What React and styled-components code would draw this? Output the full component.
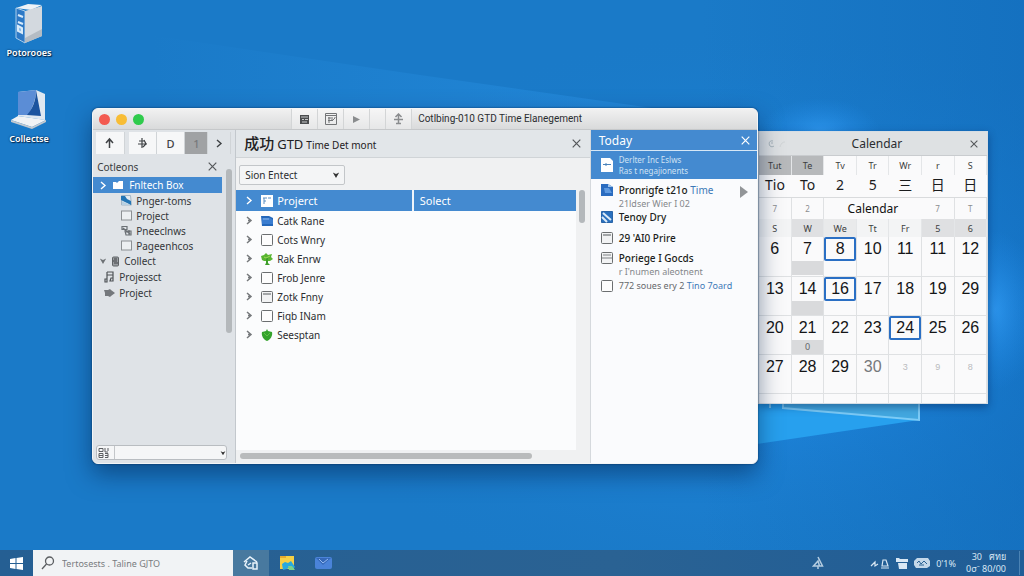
import React from "react";
import styled, { createGlobalStyle } from "styled-components";

const GlobalStyle = createGlobalStyle`
  * {
    box-sizing: border-box;
  }
  body {
    margin: 0;
    font-family: "Noto Sans", "Noto Sans CJK SC", sans-serif;
    font-size: 11px;
    color: #2b2d30;
  }
  button, select, input {
    font: inherit;
    color: inherit;
    margin: 0;
    padding: 0;
    border: none;
    background: none;
    border-radius: 0;
  }
  svg {
    display: block;
    flex: none;
  }
`

const Desktop = styled.div`
  position: relative;
  display: flex;
  flex-direction: column;
  min-height: 100vh;
  overflow: hidden;
  background-color: #1678c8;
`

const WallpaperSvg = styled.svg`
  position: absolute;
  top: 0;
  left: 0;
  width: 100%;
  height: 100%;
`

const Workspace = styled.main`
  position: relative;
  flex: 1;
  min-height: 480px;
`

const Shortcuts = styled.nav`
  position: relative;
  display: flex;
  flex-direction: column;
  align-items: center;
  gap: 28px;
  width: 58px;
  padding-top: 2px;
`

const Shortcut = styled.a`
  display: flex;
  flex-direction: column;
  align-items: center;
  gap: 2px;
  color: white;
  font-size: 9px;
  font-weight: 600;
  line-height: 14px;
  text-decoration: none;
  text-shadow: 1px 1px 1px #06284c, 0 0 2px #06284c;
`

const AppWindow = styled.section`
  position: absolute;
  z-index: 2;
  top: 108px;
  left: 9%;
  width: 65%;
  min-height: 356px;
  display: flex;
  flex-direction: column;
  border: 1px solid #f3f5f6;
  border-radius: 6px;
  background-color: #f0f1f2;
  box-shadow: 0 10px 24px rgba(0, 30, 70, 0.5), 0 0 2px rgba(0, 30, 70, 0.8);
  overflow: hidden;
`

const TitleBar = styled.header`
  display: flex;
  height: 21px;
  padding-left: 6px;
  background: linear-gradient(#f1f1f1, #d9dadb);
  border-bottom: 1px solid #c6c8ca;
`

const TrafficLights = styled.div`
  display: flex;
  align-items: center;
  gap: 6px;
  width: 192px;
`

const Light = styled.button`
  width: 11px;
  height: 11px;
  border-radius: 50%;
  background-color: ${props => props.$color};
`

const TitleTool = styled.button`
  display: flex;
  align-items: center;
  justify-content: center;
  width: ${props => props.$narrow ? 16 : 26}px;
  color: ${props => props.$dim ? "#8a8c8e" : "#3c3e40"};
  background-color: rgba(255, 255, 255, 0.35);
  border-left: 1px solid #d3d5d6;
`

const WindowTitle = styled.h1`
  flex: 1;
  margin: 0;
  padding-left: 6px;
  border-left: 1px solid #d3d5d6;
  font-family: Roboto, "Liberation Sans", sans-serif;
  font-size: 10px;
  font-weight: 400;
  line-height: 20px;
  white-space: nowrap;
`

const WindowBody = styled.div`
  flex: 1;
  display: grid;
  grid-template-columns: 143px minmax(0, 1fr) 167px;
`

const Sidebar = styled.aside`
  display: flex;
  flex-direction: column;
  background-color: #dfe3e7;
  border-right: 1px solid #c3c8cd;
`

const SidebarTools = styled.div`
  display: flex;
  height: 26px;
  padding: 2px 4px 2px 3px;
`

const SidebarTool = styled.button`
  flex: ${props => props.$plain || props.$active ? 4 : 5};
  display: flex;
  align-items: center;
  justify-content: center;
  color: ${props => props.$active ? "#77797b" : "#3f4245"};
  background-color: ${props => props.$active ? "#a0a2a4" : props.$plain ? "transparent" : "#f6f7f8"};
  border-right: 1px solid #d0d4d7;
  font-size: 11px;
  font-weight: 500;

  &:first-child {
    margin-right: 4px;
  }
`

const SidebarHeader = styled.div`
  display: flex;
  align-items: center;
  justify-content: space-between;
  height: 21px;
  padding: 0 18px 0 4px;
  font-size: 10px;
  color: #3a3d40;
`

const CloseButton = styled.button`
  display: flex;
  align-items: center;
  color: ${props => props.$light ? "white" : "#55585b"};
`

const TreeArea = styled.div`
  flex: 1;
  display: flex;
  justify-content: space-between;
  align-items: flex-start;
`

const Tree = styled.ul`
  width: 129px;
  margin: 0;
  padding: 0;
  list-style: none;
`

const TreeRow = styled.li`
  display: flex;
  align-items: center;
  gap: 4px;
  height: ${props => props.$deep ? 15 : 16}px;
  padding-left: ${props => props.$deep ? 28 : props.$flat ? 11 : 6}px;
  font-size: 10px;
  color: ${props => props.$active ? "white" : "#34373a"};
  background-color: ${props => props.$active ? "#448ad0" : "transparent"};
  white-space: nowrap;
`

const VerticalThumb = styled.div`
  width: 6px;
  height: ${props => props.$length}px;
  border-radius: 3px;
  background-color: #b4b8bb;
`

const SidebarThumb = styled(VerticalThumb)`
  margin: -8px 3px 0 0;
`

const Combo = styled.div`
  display: flex;
  align-items: center;
  height: 15px;
  margin: 0 8px 3px 3px;
  background-color: #f5f6f7;
  border: 1px solid #b9bdc1;
  border-radius: 3px;
`

const SelectBox = styled.span`
  position: relative;
  display: flex;
  align-items: center;
  flex: ${props => props.$fill ? 1 : "none"};

  svg {
    position: absolute;
    right: ${props => props.$fill ? 0 : 5}px;
    pointer-events: none;
  }
`

const ComboSelect = styled.select`
  appearance: none;
  width: 100%;
  height: 13px;
  margin-left: 3px;
  border-left: 1px solid #c3c6c9;
`

const Content = styled.section`
  display: flex;
  flex-direction: column;
  min-width: 0;
`

const ContentHeader = styled.div`
  display: flex;
  align-items: center;
  height: 28px;
  padding: 0 9px 0 8px;
  background-color: #e2e6e9;
  border-bottom: 1px solid #d0d4d7;
`

const ContentTitle = styled.h2`
  flex: 1;
  display: flex;
  align-items: baseline;
  gap: 3px;
  margin: 0;
  font-size: 13px;
  font-weight: 400;
  line-height: 24px;
  color: #1f2123;

  span {
    font-size: 15px;
    font-weight: 500;
  }
  small {
    font-size: 10px;
  }
`

const Filter = styled.div`
  display: flex;
  padding: 7px 3px 5px;
`

const FilterSelect = styled.select`
  appearance: none;
  width: 106px;
  height: 20px;
  padding-left: 5px;
  font-size: 10px;
  background-color: #f4f5f6;
  border: 1px solid #c3c6c9;
  border-radius: 2px;
`

const ListArea = styled.div`
  flex: 1;
  display: flex;
  gap: 3px;
  padding-right: 5px;
`

const ListPane = styled.div`
  flex: 1;
  background-color: #fbfcfd;
`

const ProjectTable = styled.table`
  width: 100%;
  border-collapse: collapse;
  table-layout: fixed;

  th, td {
    padding: 0 0 0 9px;
    text-align: left;
    font-weight: 400;
    white-space: nowrap;
  }
  th {
    height: 21px;
    color: white;
    background-color: #448ad0;
    font-size: 11px;
  }
  th:first-child {
    width: 52%;
  }
  th + th {
    padding-left: 6px;
    border-left: 2px solid #eef4fa;
  }
  td {
    height: 19px;
    font-size: 10px;
  }
`

const Cell = styled.div`
  display: flex;
  align-items: center;
  gap: 4px;

  svg:first-child {
    margin-right: 4px;
  }
`

const BottomScroll = styled.div`
  height: 13px;
  padding: 3px 58px 4px 4px;

  div {
    height: 6px;
    border-radius: 3px;
    background-color: #b9bbbc;
  }
`

const Today = styled.aside`
  background-color: #fafbfd;
  border-left: 1px solid #d5d9dd;
`

const TodayHeader = styled.div`
  display: flex;
  align-items: center;
  justify-content: space-between;
  height: 21px;
  padding: 0 7px 0 8px;
  color: white;
  background-color: #448ad0;
  font-size: 12px;
  border-bottom: 1px solid #d6e7f6;
`

const TodayFeature = styled.div`
  display: flex;
  align-items: center;
  gap: 6px;
  height: 28px;
  padding-left: 10px;
  color: #cfe2f4;
  background-color: #448ad0;
  font-size: 8px;
  line-height: 11px;
`

const TodayList = styled.ul`
  margin: 0;
  padding: 4px 0 0 10px;
  list-style: none;
`

const TodayItem = styled.li`
  display: flex;
  align-items: flex-start;
  gap: 6px;
  padding-bottom: ${props => props.$space}px;
  font-size: 10px;
  line-height: 14px;
  white-space: nowrap;

  > svg {
    margin-top: 1px;
  }
`

const ItemText = styled.div`
  flex: 1;
  color: ${props => props.$quiet ? "#66696c" : "#1c1e20"};
  font-size: ${props => props.$quiet ? 9 : 10}px;
  font-weight: ${props => props.$quiet ? 400 : 500};

  em {
    color: #3c79b8;
    font-style: normal;
    font-weight: 400;
  }
  small {
    display: block;
    color: #85888b;
    font-size: 9px;
    font-weight: 400;
    line-height: 13px;
  }
`

const NextButton = styled.button`
  padding: 3px 9px 0 0;
  color: #929598;
`

const CalendarWindow = styled.section`
  position: absolute;
  z-index: 1;
  top: 131px;
  left: 74%;
  width: 22.5%;
  border: 1px solid #d5dde4;
  background-color: #fafafb;
  box-shadow: 0 3px 8px rgba(0, 30, 80, 0.45);
`

const CalendarHeader = styled.header`
  display: grid;
  grid-template-columns: 1fr auto 1fr;
  align-items: center;
  height: 24px;
  padding: 0 9px;
  background-color: #dee1e3;
  border-bottom: 1px solid #c9cccf;

  h2 {
    margin: 0;
    padding-left: 8px;
    font-size: 12px;
    font-weight: 400;
  }
  button {
    justify-self: end;
  }
`

const CalendarTable = styled.table`
  width: 100%;
  border-collapse: collapse;
  table-layout: fixed;
  text-align: center;

  th, td {
    padding: 0;
    font-weight: 400;
  }
`

const DayName = styled.th`
  height: ${props => props.$short ? 18 : 19}px;
  font-size: 9px;
  color: #3c3e40;
  background-color: ${props => props.$shade};
  border-right: 1px solid #e4e6e8;
`

const Glyph = styled.td`
  height: 22px;
  font-size: 14px;
  color: #1b1c1e;
  vertical-align: top;
  line-height: 20px;
  border-bottom: 1px solid #d9dbdd;
`

const MiniCell = styled.td`
  height: 22px;
  font-size: 8px;
  color: #8a8d90;
  border-right: 1px solid #dfe1e3;
`

const MonthName = styled.th`
  font-size: 12px;
  color: #111;
`

const DateCell = styled.td`
  height: 39px;
  vertical-align: top;
  border-right: 1px solid #dfe1e3;
  border-bottom: 1px solid #dfe1e3;
  background-color: #fafafb;
`

const DateBox = styled.div`
  height: 24px;
  border: 2px solid ${props => props.$marked ? "#2a6fc4" : "transparent"};
  border-radius: 2px;
  font-family: "Liberation Sans", Arial, sans-serif;
  font-size: ${props => props.$faint ? 9 : 16}px;
  line-height: 20px;
  color: ${props => props.$faint ? "#b9bbbe" : props.$grey ? "#76787b" : "#141517"};
`

const DateNote = styled.div`
  height: 14px;
  font-size: 9px;
  line-height: 13px;
  color: #626568;
  background-color: #d9dadc;
`

const FootCell = styled.td`
  height: 10px;
  border-right: 1px solid #dfe1e3;
`

const Taskbar = styled.footer`
  position: relative;
  z-index: 3;
  display: flex;
  height: 26px;
  color: #d8e7f4;
  background: linear-gradient(90deg, #255f93, #2a6293 60%, #1f5d97);
`

const TaskButton = styled.button`
  display: flex;
  align-items: center;
  justify-content: center;
  width: ${props => props.$start ? 33 : 36}px;
  color: #e9f3fb;
  background-color: ${props => props.$active ? "#48799f" : "transparent"};
`

const SearchBox = styled.label`
  display: flex;
  align-items: center;
  gap: 7px;
  width: 200px;
  padding-left: 8px;
  color: #5b5e61;
  background-color: #f1f3f5;

  input {
    width: 150px;
    font-size: 9px;
    outline: none;
  }
  input::placeholder {
    color: #797c7f;
    opacity: 1;
  }
`

const Tray = styled.div`
  display: flex;
  align-items: center;
  gap: 6px;
  margin-left: auto;
  padding-right: 4px;
  font-size: 9px;
`

const TrayUp = styled(TaskButton)`
  margin-right: 28px;
`

const Clock = styled.div`
  width: 58px;
  padding-right: 13px;
  text-align: right;
  line-height: 12px;
  border-right: 1px solid #4b83b4;
  white-space: pre;
`

const Close = ({ size = 9 }) => (
    <svg width={size} height={size} viewBox="0 0 9 9" fill="none" stroke="currentColor" strokeWidth="1.2">
        <path d="M.7.7l7.6 7.6M8.3.7L.7 8.3"/>
    </svg>
)

const Chevron = () => (
    <svg width="8" height="9" viewBox="0 0 8 9" fill="none" stroke="currentColor" strokeWidth="1.4">
        <path d="M2 1l4 3.500L2 8"/>
    </svg>
)

const Caret = ({ size = 8, color = "#333" }) => (
    <svg width={size} height={size} viewBox="0 0 8 8" fill={color}><path d="M.8 1.500L4 3l3.200-1.500L4 7z"/></svg>
)

const Pointer = () => (
    <svg width="8" height="9" viewBox="0 0 8 9" fill="none" stroke="#76797c" strokeWidth="1.500"><path d="M2 1l4 3.500L2 8M3 4.500h3"/></svg>
)

const icons = {
    folder: <svg width="14" height="12" viewBox="0 0 14 12" fill="white"><path d="M2 3h3l1 1 2-2h4v8H2z"/></svg>,
    doc: (
        <svg width="11" height="11" viewBox="0 0 11 11">
            <path d="M.5.5h9l1 9.500H.5z" fill="#e2eaf1" stroke="#a4b6c5"/>
            <path d="M0 1h4l2 3 4 2v4C7 8 3 7 0 5z" fill="#2375b5"/>
            <path d="M1 6c3 2 5 2 8 4H1z" fill="#b7d0e2"/>
        </svg>
    ),
    box: <svg width="11" height="11" viewBox="0 0 11 11"><rect x=".5" y="1" width="10" height="9" fill="#eceff1" stroke="#8c9093"/></svg>,
    scribble: (
        <svg width="11" height="11" viewBox="0 0 11 11" fill="none" stroke="#6b7075">
            <path d="M1 1.500h5v3H1zM4 6h6v4H5zM2 3l7 6M5 7h4M8 5v5" strokeWidth="1.200"/>
        </svg>
    ),
    jar: (
        <svg width="9" height="11" viewBox="0 0 9 11">
            <rect x="1.500" y="1" width="6" height="9" rx="1" fill="#9a9ea2" stroke="#5f6366"/>
            <path d="M3 3h3M2 5h4M3 7h4" stroke="#404346"/>
        </svg>
    ),
    note: (
        <svg width="11" height="12" viewBox="0 0 11 12" fill="none" stroke="#4e5256" strokeWidth="1.200">
            <path d="M3 1h6v9H7M3 1v7M3 4h6M1 8h2v3H1zM7 7h2v3H6z"/>
        </svg>
    ),
    arrow: <svg width="11" height="10" viewBox="0 0 11 10" fill="#74787c"><path d="M0 2l4 0 2-1 1 1 4 3-4 3-1 1-2-1-3 0 0-3z"/></svg>,
    sheet: (
        <svg width="12" height="12" viewBox="0 0 12 12">
            <path d="M0 0h12v12H0z" fill="white"/>
            <path d="M2 3h4M3 3v6M3 6h2M7 3h3" stroke="#5a8fc3"/>
        </svg>
    ),
    blue: (
        <svg width="12" height="12" viewBox="0 0 12 12">
            <path d="M0 1h8l4 2v8H1z" fill="#2367ba"/>
            <path d="M1 3h8l3 2v4H1z" fill="#3a7dd0"/>
            <path d="M2 4h6" stroke="#8ab8ec"/>
        </svg>
    ),
    blueDoc: (
        <svg width="12" height="12" viewBox="0 0 12 12">
            <path d="M0 0h7l5 3v9H0z" fill="#2a6cc0"/>
            <path d="M3 4h5l3 5H4z" fill="#5f9ae0"/>
            <path d="M7 0v3h5z" fill="#a2c6ec"/>
        </svg>
    ),
    blueSlash: (
        <svg width="12" height="12" viewBox="0 0 12 12">
            <path d="M.5.5h11v11H.5z" fill="#2a70be" stroke="#2a65a8"/>
            <path d="M2 2l8 7M1 6l5 5" stroke="#dcebf8" strokeWidth="2"/>
        </svg>
    ),
    check: <svg width="12" height="12" viewBox="0 0 12 12"><rect x=".5" y=".5" width="11" height="11" rx="1" fill="#fdfdfd" stroke="#6b6e70"/></svg>,
    pane: (
        <svg width="12" height="12" viewBox="0 0 12 12">
            <rect x=".5" y=".5" width="11" height="11" rx="1" fill="#f2f3f4" stroke="#6b6e70"/>
            <path d="M2 3h8" stroke="#a3a6a8" strokeWidth="2"/>
        </svg>
    ),
    lines: (
        <svg width="12" height="12" viewBox="0 0 12 12">
            <rect x=".5" y=".5" width="11" height="11" rx="1" fill="#f2f3f4" stroke="#6b6e70"/>
            <path d="M2 3h8M1 6h10" stroke="#7f8285"/>
        </svg>
    ),
    tree: (
        <svg width="12" height="12" viewBox="0 0 12 12">
            <path d="M0 3l3-1 2-2 2 2 4-1-1 3 2 2-3 2H3L1 7z" fill="#58b531"/>
            <path d="M5 5h2v5l2 2H4l1-2z" fill="#3d9e2b"/>
            <path d="M3 4l2 1 4-2" stroke="#a0d858" fill="none"/>
        </svg>
    ),
    leaf: (
        <svg width="12" height="12" viewBox="0 0 12 12">
            <path d="M1 3l4-1 1-2 1 2 4 1c1 4-2 8-5 9C3 11 0 7 1 3z" fill="#35a32d"/>
            <path d="M3 4l3 3 3-3" stroke="#5fc244" fill="none"/>
        </svg>
    ),
}

const treeRows = [
    { icon: "doc", label: "Pnger-toms", deep: true },
    { icon: "box", label: "Project", deep: true },
    { icon: "scribble", label: "Pneeclnws", deep: true },
    { icon: "box", label: "Pageenhcos", deep: true },
]

const projects = [
    { icon: "blue", label: "Catk Rane" },
    { icon: "check", label: "Cots Wnry" },
    { icon: "tree", label: "Rak Enrw" },
    { icon: "check", label: "Frob Jenre" },
    { icon: "pane", label: "Zotk Fnny" },
    { icon: "check", label: "Fiqb INam" },
    { icon: "leaf", label: "Seesptan" },
]

const weeks = [
    ["6", "7", "8", "10", "11", "11", "12"],
    ["13", "14", "16", "17", "18", "19", "29"],
    ["20", "21", "22", "23", "24", "25", "26"],
    ["27", "28", "29", "30", "3", "9", "8"],
]

const marked = ["0-2", "1-2", "2-4"]

const Wallpaper = () => (
    <WallpaperSvg viewBox="0 0 1024 576" preserveAspectRatio="none" aria-hidden="true">
        <defs>
            <radialGradient id="glow" cx="0.76" cy="0.55" r="0.5">
                <stop offset="0" stopColor="#2598fa"/>
                <stop offset="0.5" stopColor="#1e85dc" stopOpacity="0.6"/>
                <stop offset="1" stopColor="#1a7bca" stopOpacity="0"/>
            </radialGradient>
            <radialGradient id="spot" cx="0.5" cy="0.5" r="0.5">
                <stop offset="0" stopColor="#38a5ff" stopOpacity="0.6"/>
                <stop offset="1" stopColor="#2490f0" stopOpacity="0"/>
            </radialGradient>
            <linearGradient id="edge" x1="0" x2="1" y1="0" y2="0">
                <stop offset="0" stopColor="#0f68b8" stopOpacity="0"/>
                <stop offset="1" stopColor="#0f68b8" stopOpacity="0.5"/>
            </linearGradient>
            <linearGradient id="beam" x1="0" x2="1" y1="0" y2="0">
                <stop offset="0" stopColor="#2b95e8" stopOpacity="0"/>
                <stop offset="1" stopColor="#2b95e8" stopOpacity="0.5"/>
            </linearGradient>
        </defs>
        <rect width="1024" height="576" fill="#1a7ac8"/>
        <rect width="1024" height="576" fill="url(#glow)"/>
        <path d="M150 35L420 75L680 112H150z" fill="url(#beam)"/>
        <rect x="700" width="324" height="576" fill="url(#edge)"/>
        <ellipse cx="820" cy="132" rx="60" ry="34" fill="url(#spot)"/>
        <ellipse cx="995" cy="310" rx="44" ry="80" fill="url(#spot)"/>
        <path d="M750 390h169v30L750 445z" fill="#27a0ee"/>
        <path d="M783 390h136v30L783 408z" fill="#43a8e0"/>
        <path d="M770 400v8M783 402v6l136 12v-20" fill="none" stroke="#7ccbf6" strokeWidth="2"/>
    </WallpaperSvg>
)

const Sorter = () => (
    <Sidebar>
        <SidebarTools>
            <SidebarTool aria-label="Up">
                <svg width="11" height="12" viewBox="0 0 11 12" fill="none" stroke="currentColor" strokeWidth="1.500"><path d="M5.500 11V2M2 6l3.500-4L9 6"/></svg>
            </SidebarTool>
            <SidebarTool aria-label="Add">
                <svg width="11" height="12" viewBox="0 0 11 12" fill="none" stroke="currentColor" strokeWidth="1.200"><path d="M5 1v10M2 4h6M1 7h9M7 3l2 4-3 3"/></svg>
            </SidebarTool>
            <SidebarTool>D</SidebarTool>
            <SidebarTool $active>1</SidebarTool>
            <SidebarTool $plain aria-label="More"><Chevron/></SidebarTool>
        </SidebarTools>
        <SidebarHeader>
            <span>Cotleons</span>
            <CloseButton aria-label="Close sidebar"><Close/></CloseButton>
        </SidebarHeader>
        <TreeArea>
            <Tree>
                <TreeRow $active><Chevron/>{icons.folder}Fnltech Box</TreeRow>
                {treeRows.map(row => (
                    <TreeRow key={row.label} $deep={row.deep}>{icons[row.icon]}{row.label}</TreeRow>
                ))}
                <TreeRow><Caret color="#6e7276"/>{icons.jar}Collect</TreeRow>
                <TreeRow $flat>{icons.note}Projessct</TreeRow>
                <TreeRow $flat>{icons.arrow}Project</TreeRow>
            </Tree>
            <SidebarThumb $length={164}/>
        </TreeArea>
        <Combo>
            <svg width="14" height="12" viewBox="0 0 14 12" fill="none" stroke="#5c5f62"><path d="M2 1.500h4v3H2zM8 1v4h3M2 6.500h4v4H2zM2 8.500h4M8 6.500h3v4H8M11 1v3M8 8.500h3"/></svg>
            <SelectBox $fill>
                <ComboSelect aria-label="Location"><option></option></ComboSelect>
                <Caret size={6}/>
            </SelectBox>
        </Combo>
    </Sidebar>
)

const ProjectList = () => (
    <Content>
        <ContentHeader>
            <ContentTitle><span>成功</span>GTD <small>Time Det mont</small></ContentTitle>
            <CloseButton aria-label="Close list"><Close/></CloseButton>
        </ContentHeader>
        <Filter>
            <SelectBox>
                <FilterSelect aria-label="Filter"><option>Sion Entect</option></FilterSelect>
                <Caret/>
            </SelectBox>
        </Filter>
        <ListArea>
            <ListPane>
                <ProjectTable>
                    <thead>
                        <tr>
                            <th><Cell><Chevron/>{icons.sheet}Projerct</Cell></th>
                            <th>Solect</th>
                        </tr>
                    </thead>
                    <tbody>
                        {projects.map(project => (
                            <tr key={project.label}>
                                <td><Cell><Pointer/>{icons[project.icon]}{project.label}</Cell></td>
                                <td></td>
                            </tr>
                        ))}
                    </tbody>
                </ProjectTable>
            </ListPane>
            <VerticalThumb $length={33}/>
        </ListArea>
        <BottomScroll><div/></BottomScroll>
    </Content>
)

const TodayPanel = () => (
    <Today>
        <TodayHeader>
            Today
            <CloseButton $light aria-label="Close today"><Close/></CloseButton>
        </TodayHeader>
        <TodayFeature>
            <svg width="12" height="14" viewBox="0 0 12 14">
                <path d="M0 0h9l3 3v11H0z" fill="white"/>
                <path d="M2 6.500h8M5 5v3" stroke="#4a83bb"/>
            </svg>
            <div>Derlter Inc Eslws<br/>Ras t negajionents</div>
        </TodayFeature>
        <TodayList>
            <TodayItem $space={0}>
                {icons.blueDoc}
                <ItemText>Pronrigfe t21o <em>Time</em><small>21ldser Wier I 02</small></ItemText>
                <NextButton aria-label="Open item">
                    <svg width="8" height="12" viewBox="0 0 8 12" fill="currentColor"><path d="M0 0l8 6-8 6z"/></svg>
                </NextButton>
            </TodayItem>
            <TodayItem $space={7}>{icons.blueSlash}<ItemText>Tenoy Dry</ItemText></TodayItem>
            <TodayItem $space={6}>{icons.pane}<ItemText>29 'AI0 Prire</ItemText></TodayItem>
            <TodayItem $space={1}>
                {icons.lines}
                <ItemText>Poriege I Gocds<small>r I'numen aleotnent</small></ItemText>
            </TodayItem>
            <TodayItem $space={0}>
                {icons.check}
                <ItemText $quiet>772 soues ery 2 <em>Tino 7oard</em></ItemText>
            </TodayItem>
        </TodayList>
    </Today>
)

const dayShade = (index) => {
    if (index === 1 || index === 5 || index === 6) {
        return "#dfe0e2"
    } else if (index === 2) {
        return "#e9eaeb"
    }
    return "#f3f4f5"
}

const CalendarPanel = () => (
    <CalendarWindow>
        <CalendarHeader>
            <svg width="22" height="10" viewBox="0 0 22 10" fill="none" stroke="#a8b4bb"><path d="M5 2C2 1 0 4 2 7c1 1 3 1 4 0M3 4h2"/><path d="M12 8c1-4 3-5 5-5" stroke="#d0d4d6"/></svg>
            <h2>Calendar</h2>
            <CloseButton aria-label="Close calendar"><Close size={8}/></CloseButton>
        </CalendarHeader>
        <CalendarTable>
            <tbody>
                <tr>
                    {["Tut", "Te", "Tv", "Tr", "Wr", "r", "S"].map((name, i) => (
                        <DayName key={i} $shade={i < 2 ? "#b7b9bb" : "#fafafb"}>{name}</DayName>
                    ))}
                </tr>
                <tr>
                    {["Tio", "To", "2", "5", "三", "日", "日"].map((text, i) => <Glyph key={i}>{text}</Glyph>)}
                </tr>
                <tr>
                    <MiniCell>7</MiniCell>
                    <MiniCell>2</MiniCell>
                    <MonthName colSpan={3}>Calendar</MonthName>
                    <MiniCell>7</MiniCell>
                    <MiniCell>T</MiniCell>
                </tr>
                <tr>
                    {["S", "W", "We", "Tt", "Fr", "5", "6"].map((name, i) => (
                        <DayName key={i} $short $shade={dayShade(i)}>{name}</DayName>
                    ))}
                </tr>
                {weeks.map((week, w) => (
                    <tr key={w}>
                        {week.map((day, d) => (
                            <DateCell key={d}>
                                <DateBox
                                    $marked={marked.includes(`${w}-${d}`)}
                                    $grey={day === "30"}
                                    $faint={w === 3 && d > 3}
                                >
                                    {day}
                                </DateBox>
                                {d === 1 && w < 3 && <DateNote>{w === 2 ? "0" : ""}</DateNote>}
                            </DateCell>
                        ))}
                    </tr>
                ))}
                <tr>
                    {weeks[0].map((day, i) => <FootCell key={i}/>)}
                </tr>
            </tbody>
        </CalendarTable>
    </CalendarWindow>
)

export default () => {
    return (
        <Desktop>
            <GlobalStyle/>
            <Wallpaper/>
            <Workspace>
                <Shortcuts>
                    <Shortcut href="#computer">
                        <svg width="30" height="42" viewBox="0 0 30 42">
                            <path d="M2 6L14 2l14 1-11 5z" fill="#eef3f7"/>
                            <path d="M2 6l9 3v32l-9-5z" fill="#2d79c6"/>
                            <path d="M2 6l9 3v32l-9-5z" fill="none" stroke="#a9cdeb"/>
                            <path d="M11 9l17-5v30l-17 7z" fill="#d3d9df"/>
                            <path d="M11 36l17-9v7l-17 7z" fill="#b4bcc4"/>
                            <path d="M4 13l5 2M4 20l5 2M4 24l4 2v5l-4-2z" stroke="#d8ebfa" strokeWidth="2" fill="#8bbde8"/>
                        </svg>
                        Potorooes
                    </Shortcut>
                    <Shortcut href="#collect">
                        <svg width="38" height="42" viewBox="0 0 38 42">
                            <path d="M8 4l18-2 9 4v26L8 28z" fill="#dfe8f1"/>
                            <path d="M8 4l18-2c0 10-4 18-8 25L8 27z" fill="#5b8dd6"/>
                            <path d="M26 2l5 26-14-1c6-7 9-15 9-25z" fill="#1c549f"/>
                            <path d="M1 32l7-4 28 4-14 7z" fill="#f1f3f5"/>
                            <path d="M1 32v2l21 7 14-7v-2l-14 7z" fill="#c3c9cf"/>
                        </svg>
                        Collectse
                    </Shortcut>
                </Shortcuts>
                <CalendarPanel/>
                <AppWindow>
                    <TitleBar>
                        <TrafficLights>
                            <Light $color="#f35a50" aria-label="Close"/>
                            <Light $color="#f8bd35" aria-label="Minimize"/>
                            <Light $color="#2fcb4c" aria-label="Zoom"/>
                        </TrafficLights>
                        <TitleTool aria-label="Archive">
                            <svg width="11" height="11" viewBox="0 0 11 11"><path d="M1 1h9v9H1z" fill="#4b4d4f"/><path d="M2 3h7M3 8h5M3 5.500h2M6 5.500h3" stroke="#c8cacb"/></svg>
                        </TitleTool>
                        <TitleTool aria-label="Edit">
                            <svg width="12" height="12" viewBox="0 0 12 12" fill="none" stroke="#737577"><path d="M.5.5h11v11H.5zM1 2.500h10M3 5h3M3 7.500h5M4 4v6M7 4v4l3-3V4"/></svg>
                        </TitleTool>
                        <TitleTool $dim aria-label="Run">
                            <svg width="9" height="9" viewBox="0 0 9 9" fill="currentColor"><path d="M1 1l7 3.500L1 8z"/></svg>
                        </TitleTool>
                        <TitleTool $narrow aria-label="Blank"/>
                        <TitleTool $dim aria-label="Share">
                            <svg width="11" height="12" viewBox="0 0 11 12" fill="none" stroke="currentColor" strokeWidth="1.500"><path d="M5.500 11V1M2.500 4l3-3 3 3M1 6.500h9M3 10.500h5"/></svg>
                        </TitleTool>
                        <WindowTitle>Cotlbing-010 GTD Time Elanegement</WindowTitle>
                    </TitleBar>
                    <WindowBody>
                        <Sorter/>
                        <ProjectList/>
                        <TodayPanel/>
                    </WindowBody>
                </AppWindow>
            </Workspace>
            <Taskbar>
                <TaskButton $start aria-label="Start">
                    <svg width="13" height="13" viewBox="0 0 13 13" fill="white"><path d="M0 2l5.500-1v5H0zM6.500 1L13 0v6H6.500zM0 7h5.500v5L0 11zM6.500 7H13v6l-6.500-1z"/></svg>
                </TaskButton>
                <SearchBox>
                    <svg width="14" height="14" viewBox="0 0 14 14" fill="none" stroke="currentColor" strokeWidth="1.300"><circle cx="8.500" cy="5" r="4"/><path d="M5.500 8L1 13"/></svg>
                    <input type="text" aria-label="Search" placeholder="Tertosests . Taline GJTO"/>
                </SearchBox>
                <TaskButton $active aria-label="Home">
                    <svg width="16" height="16" viewBox="0 0 16 16" fill="none" stroke="currentColor" strokeWidth="1.500"><path d="M1 7l6-5 7 5M4 6L2 10l3 3h4M10 8h4v6h-4zM5 10l3-2"/></svg>
                </TaskButton>
                <TaskButton aria-label="Files">
                    <svg width="17" height="16" viewBox="0 0 17 16"><path d="M1 1h14v13H1z" fill="#f6cf45"/><path d="M1 1h6v2H1z" fill="#e6a92c"/><path d="M3 9l3-2 3 1 3-2 4 6-3 3-2-3-3 2-4 1z" fill="#28a9df"/><path d="M9 11h4l3 4h-6z" fill="#79d08a"/></svg>
                </TaskButton>
                <TaskButton aria-label="Mail">
                    <svg width="17" height="14" viewBox="0 0 17 14"><rect x="0" y="1" width="17" height="12" rx="2" fill="#4a83d9"/><path d="M1 2l7 7 8-7z" fill="#3468b8"/><path d="M4 3l4 4 5-4" fill="none" stroke="#94baf1"/></svg>
                </TaskButton>
                <Tray>
                    <TrayUp aria-label="Show hidden icons">
                        <svg width="12" height="14" viewBox="0 0 12 14" fill="none" stroke="#b5cde1" strokeWidth="1.500"><path d="M6 1l4.500 9H7.500L6 5l-4.500 5H6v3"/></svg>
                    </TrayUp>
                    <svg width="20" height="11" viewBox="0 0 20 11" fill="none" stroke="currentColor" strokeWidth="1.200"><path d="M1 8l4-4v4l3-2M12 8l1-6h3l2 6zM11 10h8"/></svg>
                    <svg width="12" height="12" viewBox="0 0 12 12" fill="currentColor"><path d="M0 1h3l1 1h8v3H0zM2 6h9v6H3z"/></svg>
                    <svg width="16" height="12" viewBox="0 0 16 12"><path d="M3 1h11l2 3v5l-3 2H2L0 8V4z" fill="#c4d8e9"/><path d="M3 6l2-2 2 3 3-3 3 3M5 8h5" fill="none" stroke="#2a6293"/></svg>
                    <span>0'1%</span>
                    <Clock>{"30   ศทย\n0σ⁻ 80/00"}</Clock>
                </Tray>
            </Taskbar>
        </Desktop>
    )
}
